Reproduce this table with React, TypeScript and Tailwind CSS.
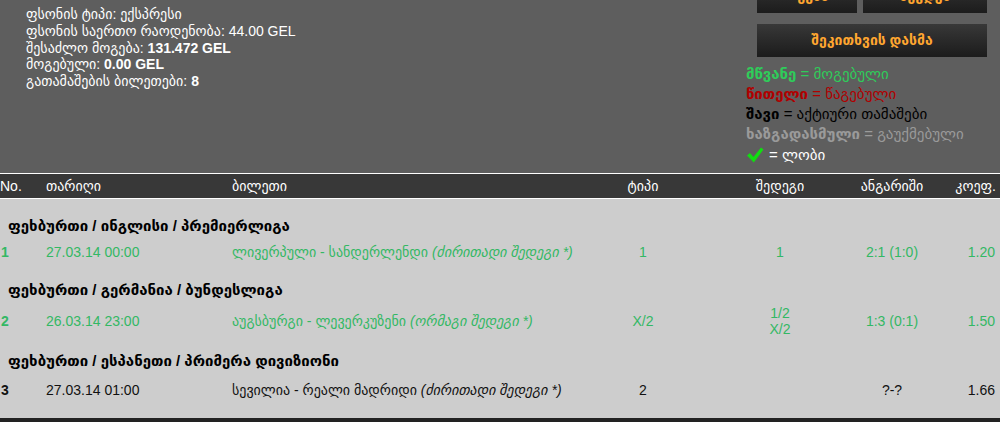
import React from "react";

const GREEN = "text-[#33b864]";

function Check() {
  return (
    <svg width="18" height="18" viewBox="0 0 18 18" className="inline-block align-middle">
      <path d="M1 9.5 L4 7 L7.5 11 L15 1.5 L17.5 3.5 L7.8 16.5 Z" fill="#11dd11" />
    </svg>
  );
}

function Btn({ w, children }: { w: string; children: React.ReactNode }) {
  return (
    <div
      className={`${w} h-[33px] flex items-center justify-center bg-gradient-to-b from-[#383838] to-[#1c1c1c] text-[#ffa630] font-bold text-[14px]`}
    >
      {children}
    </div>
  );
}

type Row = {
  group: string;
  no: string;
  date: string;
  match: string;
  kind: string;
  type: string;
  result: string[];
  score: string;
  coef: string;
  green: boolean;
  h: string;
  pb: string;
};

const rows: Row[] = [
  {
    group: "ფეხბურთი / ინგლისი / პრემიერლიგა",
    no: "1",
    date: "27.03.14 00:00",
    match: "ლივერპული - სანდერლენდი",
    kind: "(ძირითადი შედეგი *)",
    type: "1",
    result: ["1"],
    score: "2:1 (1:0)",
    coef: "1.20",
    green: true,
    h: "h-[22px]",
    pb: "pb-[12px]",
  },
  {
    group: "ფეხბურთი / გერმანია / ბუნდესლიგა",
    no: "2",
    date: "26.03.14 23:00",
    match: "აუგსბურგი - ლევერკუზენი",
    kind: "(ორმაგი შედეგი *)",
    type: "X/2",
    result: ["1/2", "X/2"],
    score: "1:3 (0:1)",
    coef: "1.50",
    green: true,
    h: "h-[32px]",
    pb: "pb-[9px]",
  },
  {
    group: "ფეხბურთი / ესპანეთი / პრიმერა დივიზიონი",
    no: "3",
    date: "27.03.14 01:00",
    match: "სევილია - რეალი მადრიდი",
    kind: "(ძირითადი შედეგი *)",
    type: "2",
    result: [""],
    score: "?-?",
    coef: "1.66",
    green: false,
    h: "h-[28px]",
    pb: "pb-[14px]",
  },
];

const cols = "grid grid-cols-[46px_186px_351px_120px_154px_70px_1fr]";

export default function App() {
  return (
    <div
      className="w-[1000px] h-[422px] overflow-hidden bg-[#222] text-[14px]"
      style={{ fontFamily: '"Liberation Sans", "DejaVu Sans", Arial, sans-serif' }}
    >
      {/* top info */}
      <div className="-mt-[20px] h-[193px] bg-[#5e5e5e] flex">
        <div className="pl-[26px] pt-[26px] text-white leading-[16.75px]">
          <div>ფსონის ტიპი: ექსპრესი</div>
          <div>ფსონის საერთო რაოდენობა: 44.00 GEL</div>
          <div>
            შესაძლო მოგება: <b>131.472 GEL</b>
          </div>
          <div>
            მოგებული: <b>0.00 GEL</b>
          </div>
          <div>
            გათამაშების ბილეთები: <b>8</b>
          </div>
        </div>
        <div className="ml-auto w-[254px]">
          <div className="pl-[11px] flex gap-[6px]">
            <Btn w="w-[100px]">« უკან</Btn>
            <Btn w="w-[124px]">ბეჭდვა</Btn>
          </div>
          <div className="pl-[11px] mt-[11px]">
            <Btn w="w-[230px]">შეკითხვის დასმა</Btn>
          </div>
          <div className="mt-[7px] leading-[20px] text-[15px]">
            <div className="text-[#2fcc5a]">
              <b>მწვანე</b> = მოგებული
            </div>
            <div className="text-[#b00000]">
              <b>წითელი</b> = წაგებული
            </div>
            <div className="text-black">
              <b>შავი</b> = აქტიური თამაშები
            </div>
            <div className="text-[#9a9a9a]">
              <b>ხაზგადასმული</b> = გაუქმებული
            </div>
            <div className="text-white flex items-center gap-[5px] mt-[1px]">
              <Check />
              <span>= ლობი</span>
            </div>
          </div>
        </div>
      </div>

      {/* table header */}
      <div className="border-y border-white bg-[#383838] text-white">
        <div className={`${cols} h-[24px] items-center`}>
          <div>No.</div>
          <div>თარიღი</div>
          <div>ბილეთი</div>
          <div className="text-center">ტიპი</div>
          <div className="text-center">შედეგი</div>
          <div className="text-center">ანგარიში</div>
          <div className="text-right pr-[4px]">კოეფ.</div>
        </div>
      </div>

      {/* body */}
      <div className="bg-[#cdcdcd] pt-[12px]">
        {rows.map((r) => {
          const c = r.green ? GREEN : "text-[#111]";
          return (
            <div key={r.no} className={r.pb}>
              <div className="h-[30px] flex items-center pl-[8px] font-bold text-black text-[15px]">{r.group}</div>
              <div className={`${cols} ${r.h} items-center ${c}`}>
                <div className="pl-[1px] font-bold">{r.no}</div>
                <div>{r.date}</div>
                <div className="whitespace-nowrap">
                  {r.match} <i>{r.kind}</i>
                </div>
                <div className="text-center">{r.type}</div>
                <div className="text-center leading-[16px]">
                  {r.result.map((x, i) => (
                    <div key={i}>{x}</div>
                  ))}
                </div>
                <div className="text-center">{r.score}</div>
                <div className="text-right pr-[5px]">{r.coef}</div>
              </div>
            </div>
          );
        })}
      </div>
    </div>
  );
}
